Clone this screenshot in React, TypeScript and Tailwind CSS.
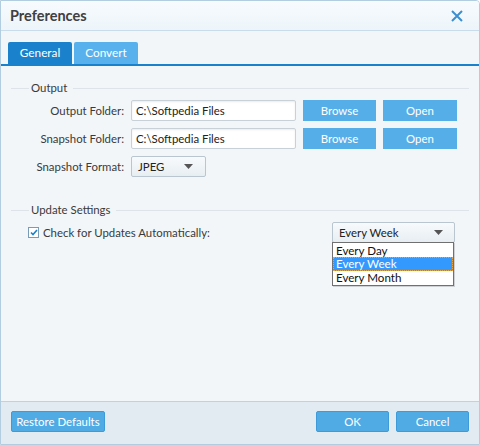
import React from 'react';

const FONT = { fontFamily: 'Lato, "Noto Sans", sans-serif' };

function GroupHeader({ label }: { label: string }) {
  return <div className="flex items-center h-[14px]">
      <div className="w-[18px] h-px bg-[#dde3e8]" />
      <span className="px-[2px] text-[11.4px] text-[#3a3a3a] leading-none whitespace-nowrap">{label}</span>
      <div className="flex-1 h-px bg-[#dde3e8] ml-[4px]" />
    </div>;
}

function BlueButton({ children, w }: { children: React.ReactNode; w: string }) {
  return <button className={`${w} h-[21px] bg-[#56aee9] text-white text-[11.4px] leading-none whitespace-nowrap`}>{children}</button>;
}

function Caret() {
  return <svg width="9" height="5" viewBox="0 0 9 5"><path d="M0 0h9L4.5 5z" fill="#555" /></svg>;
}

function FolderRow({ label }: { label: string }) {
  return <div className="flex items-center gap-[7px] h-[21px]">
      <div className="w-[113px] text-right text-[11.4px] text-[#3a3a3a] whitespace-nowrap">{label}</div>
      <div className="w-[165px] h-[21px] bg-white border border-[#c9d1d8] rounded-[2px] shadow-[inset_0_1px_2px_rgba(0,0,0,0.08)] flex items-center px-[4px] text-[11.4px] text-[#222] whitespace-nowrap">
        C:\Softpedia Files
      </div>
      <BlueButton w="w-[73px]">Browse</BlueButton>
      <BlueButton w="w-[74px]">Open</BlueButton>
    </div>;
}

export default function App() {
  return <div style={FONT} className="w-[480px] h-[445px] flex flex-col bg-[#f2f6f9] border border-[#b3cde0] rounded-tr-[4px] overflow-hidden">
      <div className="h-[30px] shrink-0 flex items-center justify-between pl-[9px] pr-[16px] bg-gradient-to-b from-[#f7fbfe] to-[#edf5fa] border-b border-[#c8dce9]">
        <span className="text-[14.5px] font-bold text-[#404040]">Preferences</span>
        <svg width="12" height="12" viewBox="0 0 12 12">
          <path d="M1 1l10 10M11 1L1 11" stroke="#3b8fd1" strokeWidth="2" />
        </svg>
      </div>

      <div className="shrink-0 flex gap-[2px] px-[7px] pt-[11px] border-b-2 border-[#1a82cc]">
        <div className="w-[64px] h-[22px] bg-[#1a82cc] rounded-t-[2px] flex items-center justify-center text-white text-[11.8px]">General</div>
        <div className="w-[64px] h-[22px] bg-[#58b1ec] rounded-t-[2px] flex items-center justify-center text-white text-[11.8px]">Convert</div>
      </div>

      <div className="flex-1 px-[10px] pt-[15px]">
        <GroupHeader label="Output" />
        <div className="flex flex-col gap-[7px] mt-[5px]">
          <FolderRow label="Output Folder:" />
          <FolderRow label="Snapshot Folder:" />
          <div className="flex items-center gap-[7px] h-[21px]">
            <div className="w-[113px] text-right text-[11.4px] text-[#3a3a3a] whitespace-nowrap">Snapshot Format:</div>
            <div className="w-[75px] h-[21px] border border-[#b9c6d0] rounded-[2px] bg-gradient-to-b from-[#f8fafc] to-[#e7eef3] flex items-center justify-between pl-[6px] pr-[12px] text-[11.4px] text-[#222]">
              <span>JPEG</span>
              <Caret />
            </div>
          </div>
        </div>

        <div className="mt-[26px]">
          <GroupHeader label="Update Settings" />
        </div>
        <div className="flex items-center h-[21px] mt-[5px]">
          <div className="ml-[17px] w-[11px] h-[11px] bg-white border border-[#7a9bb5] flex items-center justify-center">
            <svg width="8" height="7" viewBox="0 0 8 7"><path d="M1 3.5l2 2 4-4.5" stroke="#1a82cc" strokeWidth="1.6" fill="none" /></svg>
          </div>
          <span className="ml-[4px] text-[11.4px] text-[#3a3a3a] whitespace-nowrap">Check for Updates Automatically:</span>
          <div className="relative ml-auto mr-[14px]">
            <div className="w-[123px] h-[21px] border border-[#b9c6d0] rounded-[2px] bg-gradient-to-b from-[#f8fafc] to-[#e7eef3] flex items-center justify-between pl-[6px] pr-[11px] text-[11.4px] text-[#222]">
              <span>Every Week</span>
              <Caret />
            </div>
            <div className="absolute left-0 top-[20px] w-[122px] bg-white border border-[#707070] text-[11.6px] text-[#111] shadow-[1px_1px_0_rgba(0,0,0,0.15)]">
              <div className="px-[3px] h-[13px] leading-[13px] mt-px overflow-hidden whitespace-nowrap">Every Day</div>
              <div className="px-[2px] h-[14px] leading-[12px] bg-[#3399ff] text-white border border-dotted border-[#e8a040] overflow-hidden whitespace-nowrap">Every Week</div>
              <div className="px-[3px] h-[14px] leading-[13px] overflow-hidden whitespace-nowrap">Every Month</div>
            </div>
          </div>
        </div>
      </div>

      <div className="h-[43px] shrink-0 flex items-start gap-[7px] px-[10px] pt-[9px] bg-[#e1ebf1] border-t border-[#bcd3e2]">
        <button className="w-[94px] h-[21px] bg-[#50aae4] border border-[#3f9ad8] rounded-[2px] text-white text-[11.4px] leading-none whitespace-nowrap">Restore Defaults</button>
        <div className="flex-1" />
        <button className="w-[73px] h-[21px] bg-[#50aae4] border border-[#3f9ad8] rounded-[2px] text-white text-[11.4px] leading-none">OK</button>
        <button className="w-[73px] h-[21px] bg-[#50aae4] border border-[#3f9ad8] rounded-[2px] text-white text-[11.4px] leading-none">Cancel</button>
      </div>
    </div>;
}
